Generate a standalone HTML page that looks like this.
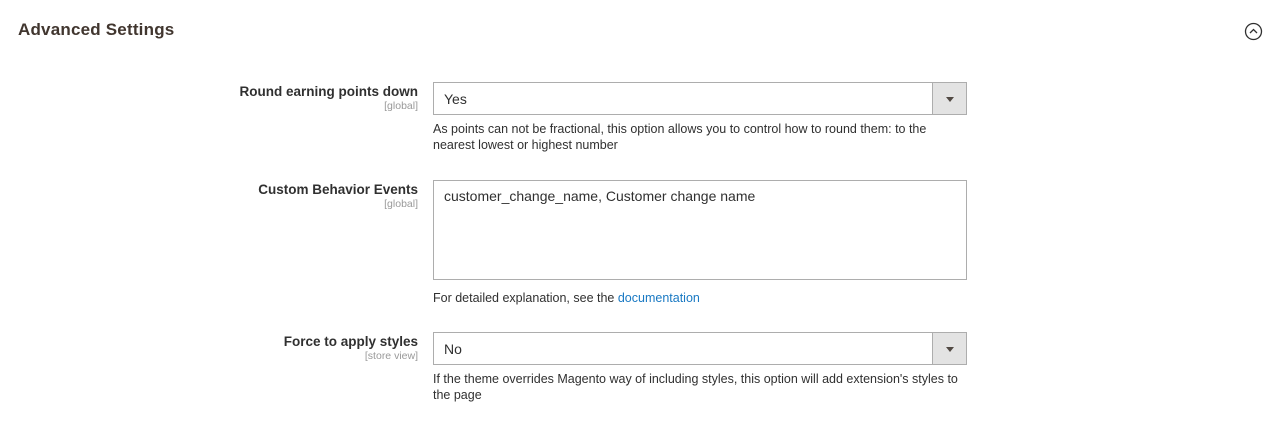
<!DOCTYPE html>
<html><head><style>
*{box-sizing:border-box;margin:0;padding:0}
body{width:1287px;height:425px;background:#fff;font-family:"Liberation Sans",sans-serif;color:#303030;position:relative;overflow:hidden}
.a{position:absolute}
h2{position:absolute;left:18px;top:20px;font-size:17px;font-weight:bold;color:#41362f;letter-spacing:0.2px}
.lbl{position:absolute;right:869px;text-align:right;font-size:13.5px;font-weight:bold;color:#303030;white-space:nowrap}
.sc{display:block;font-size:10.5px;font-weight:normal;color:#999;margin-top:1px}
.sel{position:absolute;left:433px;width:534px;height:33px;border:1px solid #adadad;font-size:14px;padding:8px 10px;background:#fff}
.sel .ar{position:absolute;right:0;top:0;width:34px;height:31px;background:#e3e3e3;border-left:1px solid #adadad}
.sel .ar:after{content:"";position:absolute;left:13px;top:14px;border-left:4px solid transparent;border-right:4px solid transparent;border-top:5px solid #514943}
.note{position:absolute;left:433px;width:540px;font-size:12.5px;line-height:16px;color:#303030}
.ta{position:absolute;left:433px;top:180px;width:534px;height:100px;border:1px solid #adadad;font-size:14px;padding:7px 10px}
a{color:#1979c3;text-decoration:none}
</style></head><body>
<h2>Advanced Settings</h2>
<svg class="a" style="left:1244px;top:22px" width="19" height="19" viewBox="0 0 19 19"><circle cx="9.5" cy="9.5" r="8" fill="none" stroke="#303030" stroke-width="1.3"/><path d="M6 11 L9.5 7.5 L13 11" fill="none" stroke="#303030" stroke-width="1.3"/></svg>

<div class="lbl" style="top:84px">Round earning points down<span class="sc">[global]</span></div>
<div class="sel" style="top:82px">Yes<div class="ar"></div></div>
<div class="note" style="top:121px;width:515px">As points can not be fractional, this option allows you to control how to round them: to the nearest lowest or highest number</div>

<div class="lbl" style="top:182px">Custom Behavior Events<span class="sc">[global]</span></div>
<div class="ta">customer_change_name, Customer change name</div>
<div class="note" style="top:290px">For detailed explanation, see the <a>documentation</a></div>

<div class="lbl" style="top:334px">Force to apply styles<span class="sc">[store view]</span></div>
<div class="sel" style="top:332px">No<div class="ar"></div></div>
<div class="note" style="top:371px">If the theme overrides Magento way of including styles, this option will add extension's styles to the page</div>
</body></html>
